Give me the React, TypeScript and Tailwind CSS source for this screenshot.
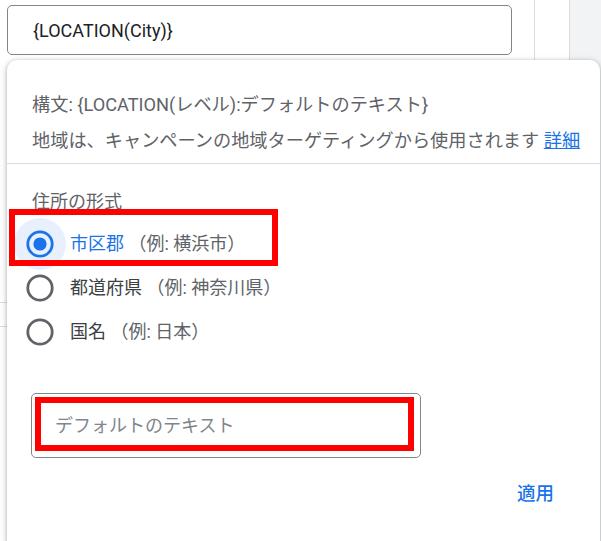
import React from "react";

function Radio({ checked }: { checked?: boolean }) {
  return (
    <div className="relative w-[28px] h-[28px] flex items-center justify-center">
      {checked && (
        <div className="absolute left-1/2 top-1/2 -translate-x-1/2 -translate-y-1/2 w-[52px] h-[52px] rounded-full bg-[#e8f0fe]" />
      )}
      <svg width="28" height="28" viewBox="0 0 28 28" className="relative">
        <circle
          cx="14"
          cy="14"
          r="12.2"
          fill="none"
          stroke={checked ? "#1a73e8" : "#5f6368"}
          strokeWidth="2.8"
        />
        {checked && <circle cx="14" cy="14" r="6.6" fill="#1a73e8" />}
      </svg>
    </div>
  );
}

function Option({
  checked,
  label,
  example,
}: {
  checked?: boolean;
  label: string;
  example: string;
}) {
  return (
    <div className="h-[44px] flex items-center">
      <div className="ml-[19px]">
        <Radio checked={checked} />
      </div>
      <div className="ml-[16px] text-[18px] leading-none whitespace-nowrap">
        <span className={checked ? "text-[#1a73e8]" : "text-[#3c4043]"}>{label}</span>
        <span className="text-[#5f6368]">{" "}（例: {example}）</span>
      </div>
    </div>
  );
}

export default function App() {
  return (
    <div
      className="relative w-[601px] h-[541px] overflow-hidden bg-white"
      style={{ fontFamily: "Roboto, 'Noto Sans CJK JP', sans-serif" }}
    >
      {/* background page */}
      <div className="flex h-full">
        <div className="w-[535px] border-r border-[#dadce0] flex flex-col">
          <div className="pt-[5px] pl-[7px]">
            <div className="w-[505px] h-[50px] border-[1.5px] border-[#80868b] rounded-[5px] flex items-center pl-[25px] text-[18px] text-[#202124]">
              {"{LOCATION(City)}"}
            </div>
          </div>
          <div className="mt-[247px] h-px w-[10px] bg-[#dadce0]" />
          <div className="mt-[23px] h-px w-[10px] bg-[#dadce0]" />
        </div>
        <div className="w-[34px]" />
        <div className="flex-1 border-l border-[#dadce0] bg-[#f1f3f4]" />
      </div>

      {/* popup */}
      <div className="absolute left-[7px] top-[60px] w-[593px] h-[490px] bg-white rounded-[10px] shadow-[0_1px_4px_rgba(60,64,67,0.35),0_2px_8px_rgba(60,64,67,0.15)]">
        <div className="pt-[27px] pb-[4px] px-[25px] border-b border-[#dadce0] text-[18.2px] leading-[36px] text-[#5f6368] whitespace-nowrap">
          <div>構文: {"{LOCATION(レベル):デフォルトのテキスト}"}</div>
          <div>
            地域は、キャンペーンの地域ターゲティングから使用されます{" "}
            <span className="text-[#1a73e8] underline">詳細</span>
          </div>
        </div>
        <div className="pt-[20px]">
          <div className="px-[25px] text-[18px] leading-[36px] text-[#5f6368]">住所の形式</div>
          <div className="mt-[2px]">
            <Option checked label="市区郡" example="横浜市" />
            <Option label="都道府県" example="神奈川県" />
            <Option label="国名" example="日本" />
          </div>
          <div className="mt-[39px] ml-[24px] w-[390px] h-[65px] border-[1.5px] border-[#80868b] rounded-[5px] flex items-center pl-[23px] text-[18px] text-[#80868b]">
            デフォルトのテキスト
          </div>
          <div className="mt-[19px] flex justify-end pr-[46px]">
            <div className="h-[36px] flex items-center text-[18.5px] font-medium text-[#1a73e8]">適用</div>
          </div>
        </div>
      </div>

      {/* annotation boxes */}
      <div className="absolute left-[9px] top-[209px] w-[269px] h-[57px] border-[6px] border-[#ff0000]" />
      <div className="absolute left-[35px] top-[397px] w-[379px] h-[54px] border-[6px] border-[#ff0000]" />
    </div>
  );
}
